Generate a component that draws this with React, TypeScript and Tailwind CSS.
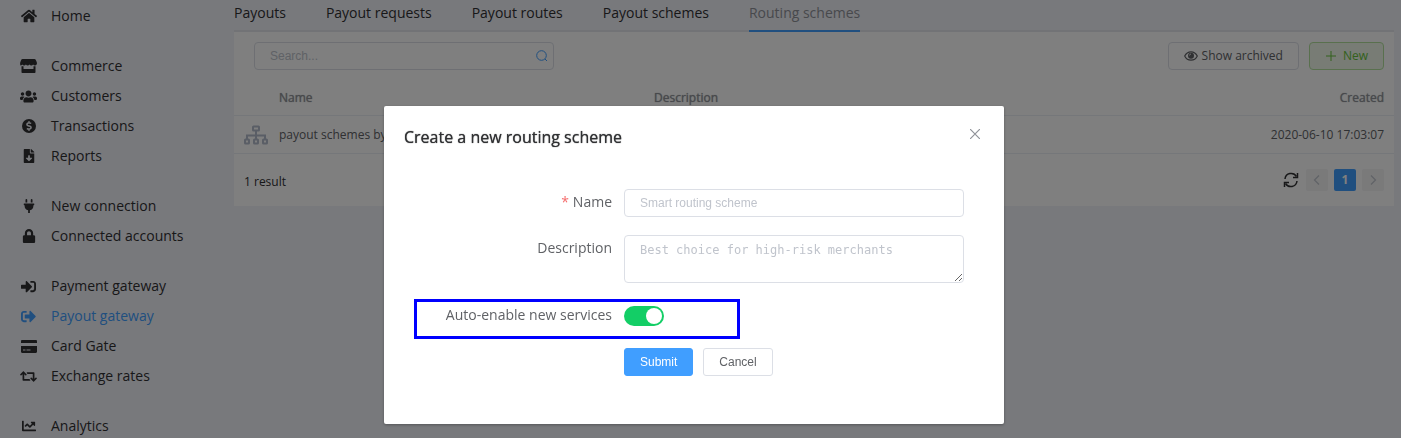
import type { ReactNode } from "react";
import {
  FaChartLine,
  FaDollarSign,
  FaFileDownload,
  FaHome,
  FaLock,
  FaPlug,
  FaRetweet,
  FaSignInAlt,
  FaSignOutAlt,
  FaUsers,
} from "react-icons/fa";

type NavItem = { label: string; icon: ReactNode; active?: boolean };

function CoinIcon() {
  return (
    <span className="flex size-[14px] items-center justify-center rounded-full bg-[#303133] text-[#f0f2f9]">
      <FaDollarSign size={10} />
    </span>
  );
}

function StoreIcon() {
  return (
    <svg viewBox="0 0 17 14" className="h-[14px] w-[17px]" fill="currentColor">
      <path d="M2.500 0h12c.5 0 .9.2 1.200.7l1 2.300c.7 1.700 0 3.500-1.700 3.500-.9 0-1.500-.4-1.900-1-.4.6-1 1-1.800 1s-1.400-.4-1.800-1c-.4.6-1 1-1.800 1s-1.400-.4-1.800-1c-.4.6-1 1-1.800 1s-1.400-.4-1.800-1c-.4.6-1 1-1.900 1C.5 6.500-.3 4.700.4 3l.9-2.300C1.500.2 2 0 2.500 0Z" />
      <path d="M1.500 7.300h2v2.700h10V7.300h2V13c0 .6-.4 1-1 1h-12c-.6 0-1-.4-1-1Z" />
    </svg>
  );
}

function CardIcon() {
  return (
    <svg viewBox="0 0 16 13" className="h-[13px] w-4" fill="currentColor">
      <path d="M1.200 0h13.600c.7 0 1.200.5 1.200 1.200V3H0V1.200C0 .5.500 0 1.200 0Z" />
      <path
        fillRule="evenodd"
        d="M0 6h16v5.800c0 .7-.5 1.200-1.200 1.200H1.200C.5 13 0 12.500 0 11.800Zm2 3.500v1h2.500v-1Zm3.500 0v1h4v-1Z"
      />
    </svg>
  );
}

const groups: NavItem[][] = [
  [{ label: "Home", icon: <FaHome size={16} /> }],
  [
    { label: "Commerce", icon: <StoreIcon /> },
    { label: "Customers", icon: <FaUsers size={17} /> },
    { label: "Transactions", icon: <CoinIcon /> },
    { label: "Reports", icon: <FaFileDownload size={14} /> },
  ],
  [
    { label: "New connection", icon: <FaPlug size={14} /> },
    { label: "Connected accounts", icon: <FaLock size={14} /> },
  ],
  [
    { label: "Payment gateway", icon: <FaSignInAlt size={15} /> },
    { label: "Payout gateway", icon: <FaSignOutAlt size={15} />, active: true },
    { label: "Card Gate", icon: <CardIcon /> },
    { label: "Exchange rates", icon: <FaRetweet size={17} /> },
  ],
  [{ label: "Analytics", icon: <FaChartLine size={14} /> }],
];

const tabs = ["Payouts", "Payout requests", "Payout routes", "Payout schemes", "Routing schemes"];

function Sidebar() {
  return (
    <nav className="flex w-[234px] shrink-0 flex-col gap-5 pt-px pl-5">
      {groups.map((items) => (
        <ul key={items[0].label}>
          {items.map((item) => (
            <li key={item.label}>
              <a
                href="#"
                className={`flex h-[30px] items-center gap-[14px] text-sm ${item.active ? "text-[#409eff]" : "text-[#303133]"}`}
              >
                <span className="flex w-[17px] justify-center">{item.icon}</span>
                {item.label}
              </a>
            </li>
          ))}
        </ul>
      ))}
    </nav>
  );
}

function SchemeIcon() {
  return (
    <svg viewBox="0 0 24 20" className="h-5 w-6" fill="none" stroke="#b4bccc" strokeWidth="2">
      <rect x="9" y="1.500" width="6" height="4" rx="0.500" />
      <rect x="1" y="14.500" width="4" height="4" rx="0.500" />
      <rect x="10" y="14.500" width="4" height="4" rx="0.500" />
      <rect x="19" y="14.500" width="4" height="4" rx="0.500" />
      <path d="M12 6v8M3 14v-3.500h18V14" />
    </svg>
  );
}

function RefreshIcon() {
  return (
    <svg viewBox="0 0 16 16" className="size-4" fill="none" stroke="currentColor" strokeWidth="1.500">
      <path d="M2 7a6.200 6.200 0 0 1 11.500-2.500M14 9A6.200 6.200 0 0 1 2.500 11.500" />
      <path d="M14.500 1v4.500H10M1.500 15v-4.500H6" />
    </svg>
  );
}

function EyeIcon() {
  return (
    <svg viewBox="0 0 14 10" className="h-[10px] w-[14px]" fill="none" stroke="currentColor" strokeWidth="1.200">
      <path d="M0.700 5C2 2.300 4.200 0.800 7 0.800S12 2.300 13.300 5C12 7.700 9.800 9.200 7 9.200S2 7.700 0.700 5Z" />
      <circle cx="7" cy="4.700" r="3" fill="currentColor" stroke="none" />
      <path d="M5.500 4.500A1.500 1.500 0 0 1 7 3" stroke="#fff" strokeWidth="0.800" />
    </svg>
  );
}

function Chevron({ right }: { right?: boolean }) {
  return (
    <svg viewBox="0 0 12 12" className="size-3" fill="none" stroke="currentColor" strokeWidth="1.200">
      <path d={right ? "M4 1.500 8.500 6 4 10.500" : "M8 1.500 3.500 6 8 10.500"} />
    </svg>
  );
}

function SchemesCard() {
  return (
    <section className="bg-white text-xs text-[#606266]">
      <div className="flex items-center gap-[10px] pt-[10px] pr-[10px] pl-5">
        <label className="mr-auto flex h-7 w-[300px] items-center rounded border border-[#dcdfe6] pr-[5px] pl-[15px]">
          <input
            type="search"
            aria-label="Search"
            placeholder="Search..."
            className="min-w-0 flex-1 font-['Liberation_Sans',sans-serif] text-xs outline-none placeholder:text-[#c0c4cc]"
          />
          <svg viewBox="0 0 12 12" className="size-3" fill="none" stroke="#409eff">
            <circle cx="5.500" cy="5.500" r="4.800" />
            <path d="m9 9 2 2" />
          </svg>
        </label>
        <button className="flex h-7 items-center gap-1 rounded border border-[#dcdfe6] px-[15px]">
          <EyeIcon />
          Show archived
        </button>
        <button className="flex h-7 items-center gap-[6px] rounded border border-[#b3e19d] bg-[#f0f9eb] px-[15px] text-[#67c23a]">
          <svg viewBox="0 0 12 12" className="size-3" fill="none" stroke="currentColor">
            <path d="M6 1v10M1 6h10" />
          </svg>
          New
        </button>
      </div>
      <table className="mt-[13px] w-full table-fixed border-collapse">
        <colgroup>
          <col className="w-[35px]" />
          <col />
          <col />
          <col />
        </colgroup>
        <thead className="text-[#909399] [text-shadow:0_0_1px_currentColor]">
          <tr className="h-8 border-b border-[#ebeef5] text-left">
            <td />
            <th scope="col" className="px-[10px] pb-[2px] font-normal">Name</th>
            <th scope="col" className="px-[10px] pb-[2px] font-normal">Description</th>
            <th scope="col" className="px-[10px] pb-[2px] text-right font-normal">Created</th>
          </tr>
        </thead>
        <tbody>
          <tr className="h-[38px] border-b border-[#ebeef5]">
            <td className="pt-[2px] pl-[10px]"><SchemeIcon /></td>
            <td className="px-[10px] pt-[2px]">payout schemes by</td>
            <td className="px-[10px]" />
            <td className="px-[10px] pt-px text-right">2020-06-10 17:03:07</td>
          </tr>
        </tbody>
      </table>
      <div className="flex h-[52px] items-center justify-between px-[10px]">
        <span className="pt-1 text-[#303133]">1 result</span>
        <div className="flex items-center gap-[6px] text-[#c0c4cc]">
          <button aria-label="Refresh" className="mr-px text-[#303133]"><RefreshIcon /></button>
          <button aria-label="Previous page" className="flex size-[22px] items-center justify-center rounded-xs bg-[#f4f4f5]"><Chevron /></button>
          <button className="size-[22px] rounded-xs bg-[#409eff] font-bold text-white">1</button>
          <button aria-label="Next page" className="flex size-[22px] items-center justify-center rounded-xs bg-[#f4f4f5]"><Chevron right /></button>
        </div>
      </div>
    </section>
  );
}

const labelClass = "w-[208px] shrink-0 text-right text-sm leading-[26px]";

function CreateDialog() {
  return (
    <div className="fixed inset-0 bg-black/50 pt-[106px] pr-[13px]">
      <div
        role="dialog"
        aria-labelledby="dialog-title"
        className="mx-auto w-[620px] rounded-xs bg-white px-5 pt-[19px] pb-12 text-[#606266] shadow-[0_1px_3px_rgba(0,0,0,0.3)]"
      >
        <header className="flex items-start justify-between">
          <h2 id="dialog-title" className="text-base leading-6 font-medium text-[#303133] [text-shadow:0_0_1px_currentColor]">
            Create a new routing scheme
          </h2>
          <button aria-label="Close" className="p-[3px] text-[#909399]">
            <svg viewBox="0 0 10 10" className="m-px size-[10px]" fill="none" stroke="currentColor" strokeWidth="1.200">
              <path d="m0 0 10 10M10 0 0 10" />
            </svg>
          </button>
        </header>
        <form className="mt-10 pr-5" onSubmit={(event) => event.preventDefault()}>
          <div className="flex gap-3">
            <label htmlFor="name" className={labelClass}>
              <span className="mr-1 text-[#f56c6c]">*</span>Name
            </label>
            <input
              id="name"
              placeholder="Smart routing scheme"
              className="h-7 min-w-0 flex-1 rounded border border-[#dcdfe6] px-[15px] font-['Liberation_Sans',sans-serif] text-xs outline-none placeholder:text-[#c0c4cc]"
            />
          </div>
          <div className="mt-[18px] flex gap-3">
            <label htmlFor="description" className={labelClass}>Description</label>
            <textarea
              id="description"
              placeholder="Best choice for high-risk merchants"
              className="h-12 min-w-0 flex-1 resize-y rounded border border-[#dcdfe6] px-[15px] py-[5px] font-['DejaVu_Sans_Mono',monospace] text-xs leading-[18px] outline-none placeholder:text-[#c0c4cc]"
            />
          </div>
          <div className="mt-4 ml-[10px] flex h-10 w-[326px] gap-3 border-[3px] border-[#0000ff]">
            <label htmlFor="auto-enable" className="w-[195px] shrink-0 text-right text-sm leading-[26px]">
              Auto-enable new services
            </label>
            <input
              id="auto-enable"
              type="checkbox"
              role="switch"
              defaultChecked
              className="mt-1 flex h-5 w-10 appearance-none items-center justify-start rounded-full bg-[#dcdfe6] px-[2px] before:size-4 before:rounded-full before:bg-white checked:justify-end checked:bg-[#13ce66]"
            />
          </div>
          <div className="mt-[9px] flex gap-[10px] pl-[220px] font-['Liberation_Sans',sans-serif] text-xs">
            <button type="submit" className="h-7 rounded-[3px] border border-[#409eff] bg-[#409eff] px-[15px] text-white">Submit</button>
            <button type="button" className="h-7 rounded-[3px] border border-[#dcdfe6] bg-white px-[15px]">Cancel</button>
          </div>
        </form>
      </div>
    </div>
  );
}

export default function App() {
  return (
    <div className="flex h-screen overflow-hidden bg-[#f0f2f9] font-['Open_Sans',sans-serif]">
      <Sidebar />
      <main className="min-w-0 flex-1 pr-[7px]">
        <nav className="flex h-8 gap-10 border-b-2 border-[#e4e7ed] text-sm">
          {tabs.map((tab) => (
            <a
              key={tab}
              href="#"
              className={`h-8 pt-[3px] ${tab === "Routing schemes" ? "border-b-2 border-[#409eff] text-[#909399]" : "text-[#303133]"}`}
            >
              {tab}
            </a>
          ))}
        </nav>
        <SchemesCard />
      </main>
      <CreateDialog />
    </div>
  );
}
